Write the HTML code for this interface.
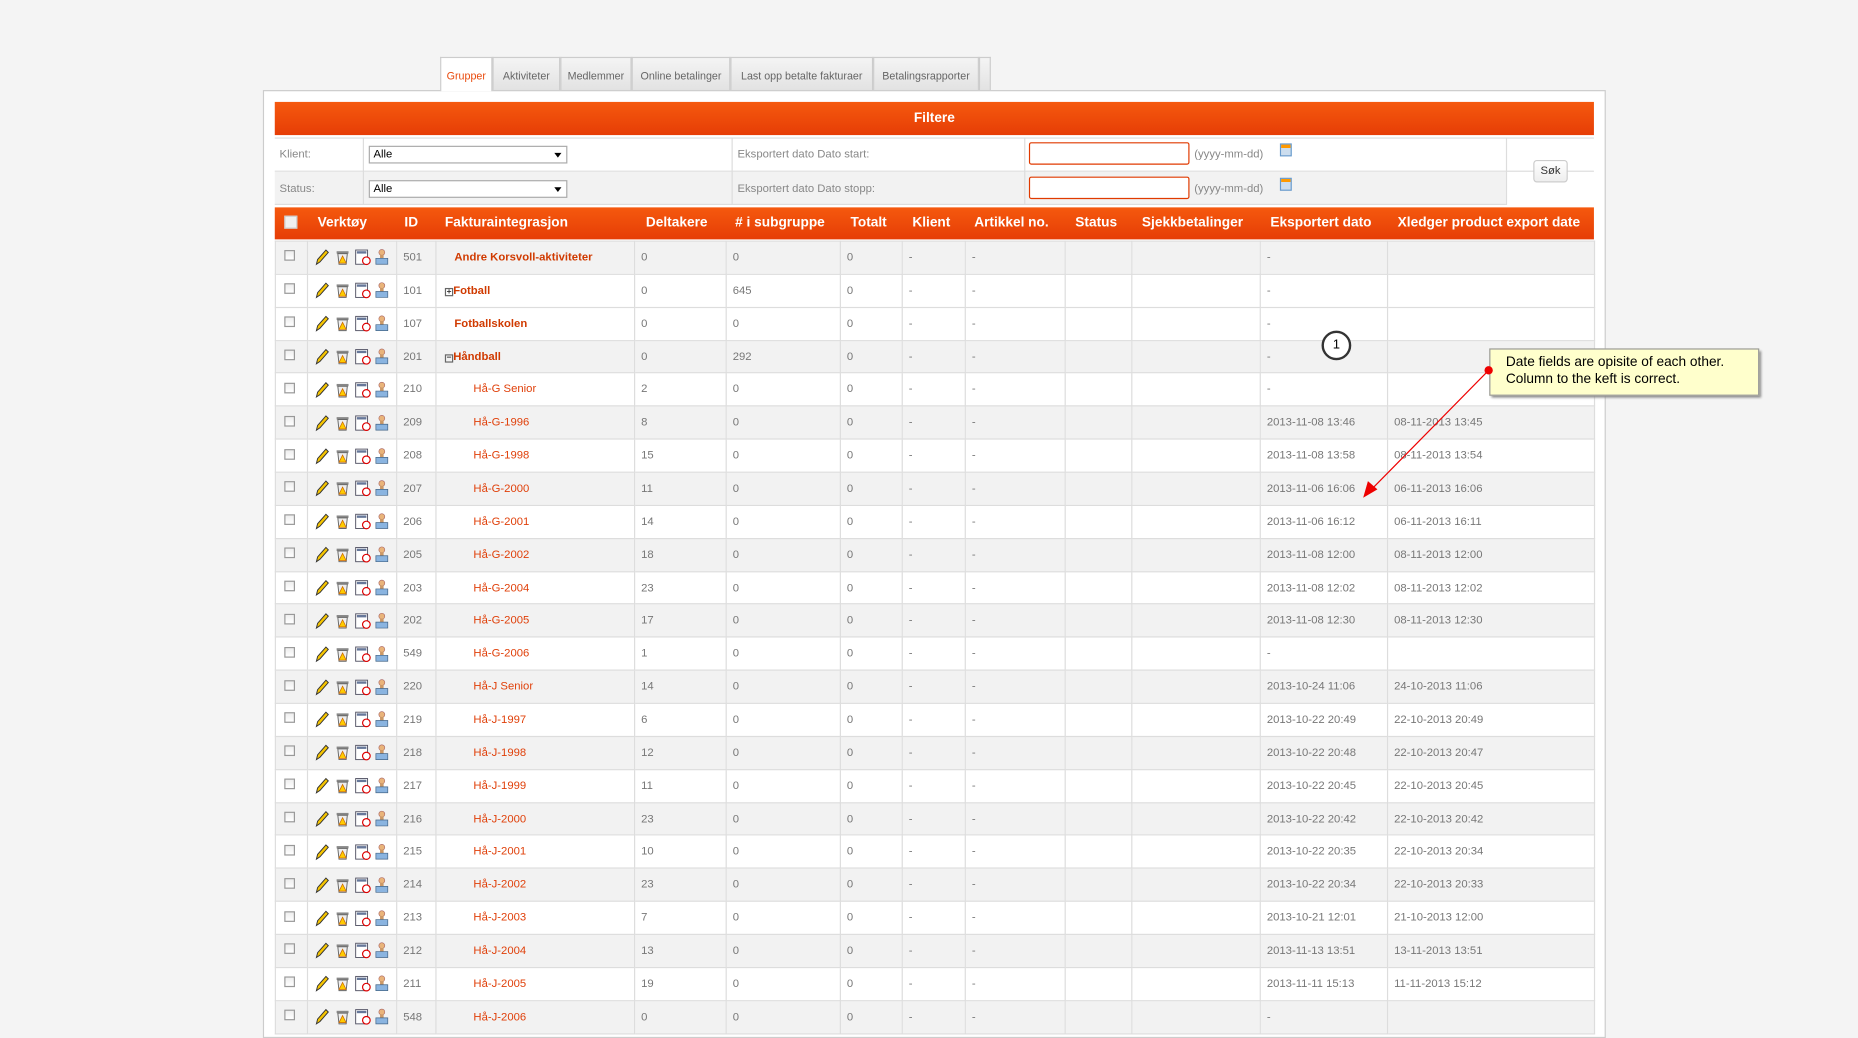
<!DOCTYPE html>
<html><head><meta charset="utf-8"><style>
*{box-sizing:border-box;margin:0;padding:0}
body{width:1858px;height:1019px;overflow:hidden;background:#f4f4f4;font-family:"Liberation Sans",sans-serif}
#w{position:absolute;left:0;top:0;width:1562px;height:860px;transform:scale(1.1895,1.185);transform-origin:0 0}
.a{position:absolute}
.tab{position:absolute;top:48px;height:28px;background:linear-gradient(#f4f4f4,#e2e2e2);border:1px solid #ccc;border-bottom:none;font-size:9px;color:#666;text-align:center;line-height:30px}
#panel{left:221px;top:76px;width:1129px;height:800px;background:#fff;border:1px solid #ccc}
.or{background:linear-gradient(#f5590e,#e63d06);color:#fff;font-weight:bold}
table{border-collapse:collapse;table-layout:fixed;position:absolute;left:231px;top:203px;width:1109px;font-size:9.5px;color:#777}
td{border:1px solid #ddd;height:27.86px;padding:0 0 0 5px;white-space:nowrap;overflow:hidden;background:#fff}
tr.g td{background:#f2f2f2}
.n{color:#d03a00;font-weight:bold}
.n.c{font-weight:normal;color:#e0400a}
.cb{display:inline-block;width:9px;height:9px;border:1px solid #999;background:linear-gradient(#eee,#fff);margin-left:2px}
.hd{position:absolute;top:175px;height:27px;line-height:27px;font-size:11.5px}
.flab{position:absolute;font-size:9.5px;color:#888}
.sel{position:absolute;left:310px;width:167px;height:15px;border:1px solid #aaa;font-size:9.5px;line-height:13px;padding-left:3px;background:#fff;color:#000}
.sel:after{content:"";position:absolute;right:4px;top:5px;border:3px solid transparent;border-top:4px solid #000}
.inp{position:absolute;left:865px;width:135px;height:19px;border:1px solid #e03a00;border-radius:2px;background:#fff}
</style></head><body><div id="w">
<div class="tab" style="left:370px;width:44px;background:#fff;color:#e94a0c;height:29px;z-index:2">Grupper</div>
<div class="tab" style="left:414px;width:57px">Aktiviteter</div>
<div class="tab" style="left:471px;width:60px">Medlemmer</div>
<div class="tab" style="left:531px;width:83px">Online betalinger</div>
<div class="tab" style="left:614px;width:120px">Last opp betalte fakturaer</div>
<div class="tab" style="left:734px;width:89px">Betalingsrapporter</div>
<div class="tab" style="left:823px;width:10px"></div>
<div id="panel" class="a"></div>
<div class="a or" style="left:231px;top:86px;width:1109px;height:28px;text-align:center;line-height:29px;font-size:11.5px">Filtere</div>
<div class="a" style="left:231px;top:116px;width:1109px;height:29px;background:#fff;border-top:1px solid #ddd;border-bottom:1px solid #ddd"></div>
<div class="a" style="left:231px;top:145px;width:1035px;height:28px;background:#f2f2f2;border-bottom:1px solid #ddd"></div>
<div class="a" style="left:305px;top:116px;width:1px;height:57px;background:#ddd"></div>
<div class="a" style="left:615px;top:116px;width:1px;height:57px;background:#ddd"></div>
<div class="a" style="left:861px;top:116px;width:1px;height:57px;background:#ddd"></div>
<div class="a" style="left:1266px;top:116px;width:1px;height:57px;background:#ddd"></div>
<div class="flab" style="left:235px;top:125px">Klient:</div>
<div class="flab" style="left:235px;top:154px">Status:</div>
<div class="sel" style="top:123px">Alle</div>
<div class="sel" style="top:152px">Alle</div>
<div class="flab" style="left:620px;top:125px">Eksportert dato Dato start:</div>
<div class="flab" style="left:620px;top:154px">Eksportert dato Dato stopp:</div>
<div class="inp" style="top:120px"></div><div class="inp" style="top:149px"></div>
<div class="flab" style="left:1004px;top:125px">(yyyy-mm-dd)</div>
<div class="flab" style="left:1004px;top:154px">(yyyy-mm-dd)</div>
<div class="a" style="left:1076px;top:121px;width:10px;height:11px;border:1px solid #69c;background:linear-gradient(#f90 30%,#cde 30%)"></div>
<div class="a" style="left:1076px;top:150px;width:10px;height:11px;border:1px solid #69c;background:linear-gradient(#f90 30%,#cde 30%)"></div>
<div class="a" style="left:1289px;top:135px;width:29px;height:19px;border:1px solid #ccc;border-radius:3px;background:linear-gradient(#fff,#eee);font-size:9.5px;text-align:center;line-height:18px;color:#333">Søk</div>
<div class="a or" style="left:231px;top:175px;width:1109px;height:27px"></div>
<div class="hd" style="left:239px;top:182px;width:11px;height:11px;border:1px solid #ccc;background:#f0f0f0"></div>
<div class="hd or" style="left:267px;background:none">Verktøy</div>
<div class="hd or" style="left:340px;background:none">ID</div>
<div class="hd or" style="left:374px;background:none">Fakturaintegrasjon</div>
<div class="hd or" style="left:543px;background:none">Deltakere</div>
<div class="hd or" style="left:618px;background:none"># i subgruppe</div>
<div class="hd or" style="left:715px;background:none">Totalt</div>
<div class="hd or" style="left:767px;background:none">Klient</div>
<div class="hd or" style="left:819px;background:none">Artikkel no.</div>
<div class="hd or" style="left:904px;background:none">Status</div>
<div class="hd or" style="left:960px;background:none">Sjekkbetalinger</div>
<div class="hd or" style="left:1068px;background:none">Eksportert dato</div>
<div class="hd or" style="left:1175px;background:none">Xledger product export date</div>
<table id="t"><colgroup><col style="width:27px"><col style="width:75px"><col style="width:33px"><col style="width:167px"><col style="width:77px"><col style="width:96px"><col style="width:52px"><col style="width:53px"><col style="width:84px"><col style="width:56px"><col style="width:108px"><col style="width:107px"><col style="width:174px"></colgroup><tbody></tbody></table>
<div class="a" style="left:1111px;top:279px;width:25px;height:25px;border:2px solid #333;border-radius:50%;background:#fff;text-align:center;line-height:21px;font-size:11px;color:#000">1</div>
<svg class="a" style="left:0;top:0" width="1562" height="860"><line x1="1251" y1="313" x2="1154" y2="412" stroke="#e00" stroke-width="1"/><polygon points="1146,420 1150,406 1158,413" fill="#e00"/></svg>
<div class="a" style="left:1252px;top:294px;width:227px;height:40px;background:#ffffcc;border:1px solid #999;box-shadow:2px 2px 2px #888;font-size:11.5px;color:#000;padding:4px 0 0 13px;line-height:14px">Date fields are opisite of each other.<br>Column to the keft is correct.</div>
<div class="a" style="left:1248px;top:309px;width:7px;height:7px;border-radius:50%;background:#e00"></div>
</div>
<script>
var d=[["501","Andre Korsvoll-aktiviteter",0,"0","0","-",""],["101","Fotball",1,"0","645","-",""],["107","Fotballskolen",0,"0","0","-",""],["201","Håndball",2,"0","292","-",""],["210","Hå-G Senior",3,"2","0","-",""],["209","Hå-G-1996",3,"8","0","2013-11-08 13:46","08-11-2013 13:45"],["208","Hå-G-1998",3,"15","0","2013-11-08 13:58","08-11-2013 13:54"],["207","Hå-G-2000",3,"11","0","2013-11-06 16:06","06-11-2013 16:06"],["206","Hå-G-2001",3,"14","0","2013-11-06 16:12","06-11-2013 16:11"],["205","Hå-G-2002",3,"18","0","2013-11-08 12:00","08-11-2013 12:00"],["203","Hå-G-2004",3,"23","0","2013-11-08 12:02","08-11-2013 12:02"],["202","Hå-G-2005",3,"17","0","2013-11-08 12:30","08-11-2013 12:30"],["549","Hå-G-2006",3,"1","0","-",""],["220","Hå-J Senior",3,"14","0","2013-10-24 11:06","24-10-2013 11:06"],["219","Hå-J-1997",3,"6","0","2013-10-22 20:49","22-10-2013 20:49"],["218","Hå-J-1998",3,"12","0","2013-10-22 20:48","22-10-2013 20:47"],["217","Hå-J-1999",3,"11","0","2013-10-22 20:45","22-10-2013 20:45"],["216","Hå-J-2000",3,"23","0","2013-10-22 20:42","22-10-2013 20:42"],["215","Hå-J-2001",3,"10","0","2013-10-22 20:35","22-10-2013 20:34"],["214","Hå-J-2002",3,"23","0","2013-10-22 20:34","22-10-2013 20:33"],["213","Hå-J-2003",3,"7","0","2013-10-21 12:01","21-10-2013 12:00"],["212","Hå-J-2004",3,"13","0","2013-11-13 13:51","13-11-2013 13:51"],["211","Hå-J-2005",3,"19","0","2013-11-11 15:13","11-11-2013 15:12"],["548","Hå-J-2006",3,"0","0","-",""]];
var ic='<svg width="70" height="14" style="vertical-align:middle"><path d="M2 13 L3 9 L10 1 L12 3 L5 11 Z" fill="#f5c400" stroke="#333" stroke-width="0.8"/><g transform="translate(18,0)"><rect x="1" y="2" width="10" height="2" fill="#888"/><path d="M2 4 L3 13 L9 13 L10 4Z" fill="#eee" stroke="#666" stroke-width="0.8"/><path d="M6 6 L9 12 L3 12Z" fill="#fc0" stroke="#c60" stroke-width="0.6"/></g><g transform="translate(34,0)"><rect x="1" y="1" width="10" height="12" fill="#fff" stroke="#556" stroke-width="0.8"/><rect x="2" y="2" width="8" height="2" fill="#679"/><circle cx="10" cy="10" r="3.2" fill="#fff" stroke="#d00" stroke-width="1"/></g><g transform="translate(51,0)"><circle cx="6" cy="3" r="2.5" fill="#e9b47a" stroke="#a66" stroke-width="0.5"/><rect x="4.5" y="5" width="3" height="3" fill="#c96"/><path d="M1 13 L1 8 L11 8 L11 13Z" fill="#8ab4e0" stroke="#468" stroke-width="0.6"/></g></svg>';
var h="";d.forEach(function(r,i){var g=(i==0||(i>2&&i%2==1))?' class="g"':'';var box=function(s){return '<span style="display:inline-block;width:7px;height:7px;border:1px solid #666;font-size:7px;line-height:5px;text-align:center;color:#333;margin-left:1px">'+s+'</span>'};var pre=r[2]==1?box('+'):r[2]==2?box('−'):'';var pad=r[2]==3?'padding-left:31px':r[2]==0?'padding-left:15px':'padding-left:6px';var cc=r[2]==3?'n c':'n';
h+='<tr'+g+'><td><span class="cb"></span></td><td>'+ic+'</td><td>'+r[0]+'</td><td class="'+cc+'" style="'+pad+'">'+pre+r[1]+'</td><td>'+r[3]+'</td><td>'+r[4]+'</td><td>0</td><td>-</td><td>-</td><td></td><td></td><td>'+r[5]+'</td><td>'+r[6]+'</td></tr>';});
document.querySelector("#t tbody").innerHTML=h;
</script>
</body></html>
